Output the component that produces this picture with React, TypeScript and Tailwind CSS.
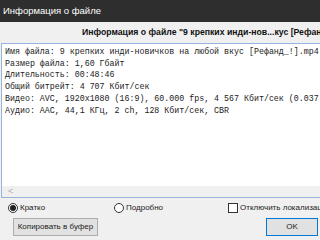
export default function App() {
  const lines = [
    "Имя файла: 9 крепких инди-новичков на любой вкус [Рефанд_!].mp4",
    "Размер файла: 1,60 Гбайт",
    "Длительность: 00:48:46",
    "Общий битрейт: 4 707 Кбит/сек",
    "Видео: AVC, 1920x1080 (16:9), 60.000 fps, 4 567 Кбит/сек (0.037 бит/пиксель)",
    "Аудио: AAC, 44,1 КГц, 2 ch, 128 Кбит/сек, CBR",
  ];

  return (
    <div className="w-[320px] h-[240px] overflow-hidden bg-[#f0f0f0] font-['Liberation_Sans',Arial,sans-serif] text-black">
      {/* title bar */}
      <div className="h-[22px] bg-[#2e2e2e] text-white text-[9.5px] flex items-center pl-[3px] whitespace-nowrap">
        Информация о файле
      </div>

      {/* header */}
      <div className="h-[21px] flex items-center pl-[82px] whitespace-nowrap overflow-hidden text-[8.7px] font-bold text-[#111]">
        Информация о файле "9 крепких инди-нов...кус [Рефанд_!].mp4"
      </div>

      {/* info box */}
      <div className="ml-[1px] w-[330px] h-[155px] border border-[#98b4dc] bg-white flex flex-col">
        <div className="flex-1 pt-[2px] pl-[3px] font-['Liberation_Mono','Courier_New',monospace] text-[8.3px] leading-[11.7px] text-[#222] whitespace-nowrap overflow-hidden">
          {lines.map((l) => (
            <div key={l}>{l}</div>
          ))}
        </div>
        <div className="h-[11px] bg-[#f0f0f0] flex items-center pl-[6px] text-[9px] text-[#b0b0b0]">
          &lt;
        </div>
      </div>

      {/* options */}
      <div className="h-[19px] flex items-center text-[8px] whitespace-nowrap text-[#222] overflow-hidden">
        <div className="shrink-0 flex items-center gap-[2px] pl-[8px] w-[114px]">
          <span className="shrink-0 w-[10px] h-[10px] rounded-full border border-[#333] bg-white flex items-center justify-center">
            <span className="w-[6px] h-[6px] rounded-full bg-[#222]" />
          </span>
          Кратко
        </div>
        <div className="shrink-0 flex items-center gap-[2px] w-[114px]">
          <span className="shrink-0 w-[10px] h-[10px] rounded-full border border-[#333] bg-white" />
          Подробно
        </div>
        <div className="shrink-0 flex items-center gap-[2px]">
          <span className="shrink-0 w-[10px] h-[10px] border border-[#333] bg-white" />
          Отключить локализацию
        </div>
      </div>

      {/* buttons */}
      <div className="flex items-center pt-[1px] text-[8px] whitespace-nowrap text-[#222]">
        <div className="shrink-0 ml-[13px] w-[85px] h-[18px] bg-[#e1e1e1] border border-[#adadad] flex items-center justify-center">
          Копировать в буфер
        </div>
        <div className="shrink-0 ml-[168px] w-[52px] h-[18px] bg-[#e1e1e1] border border-[#0078d7] flex items-center justify-center">
          OK
        </div>
      </div>
    </div>
  );
}
